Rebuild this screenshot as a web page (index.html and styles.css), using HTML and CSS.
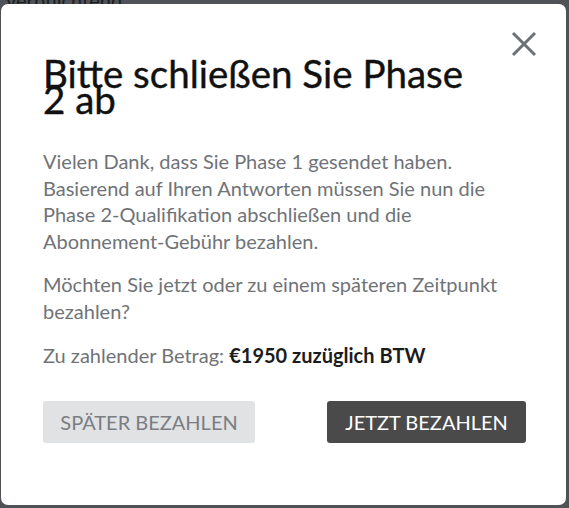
FILE: index.html
```html
<!doctype html>
<html lang="de">
<head>
	<meta charset="UTF-8">
	<title>Phase 2</title>
	<link rel="stylesheet" href="styles.css">
</head>
<body>
	<div class="page">
		<p class="page-text">verpflichtend</p>
	</div>
	<div class="overlay">
		<div class="modal">
			<button class="close" type="button" aria-label="Schließen">
				<svg width="26" height="26" viewBox="0 0 26 26">
					<path d="M2 2 L24 24 M24 2 L2 24" stroke="#6c7175" stroke-width="3" fill="none"/>
				</svg>
			</button>
			<h1 class="title">Bitte schließen Sie Phase 2 ab</h1>
			<p class="text">Vielen Dank, dass Sie Phase 1 gesendet haben. Basierend auf Ihren Antworten müssen Sie nun die Phase 2-Qualifikation abschließen und die Abonnement-Gebühr bezahlen.</p>
			<p class="text">Möchten Sie jetzt oder zu einem späteren Zeitpunkt bezahlen?</p>
			<p class="text">Zu zahlender Betrag: <strong>€1950 zuzüglich BTW</strong></p>
			<div class="actions">
				<button class="btn btn-later" type="button">Später bezahlen</button>
				<button class="btn btn-now" type="button">Jetzt bezahlen</button>
			</div>
		</div>
	</div>
</body>
</html>
```

FILE: styles.css
```css
*{
	margin: 0;
	padding: 0;
	box-sizing: border-box;
}
body{
	background-color: #4f5256;
	font-family: Lato, "Open Sans", sans-serif;
}
.page{
	padding: 0 6px;
	height: 508px;
	overflow: hidden;
}
.page-text{
	margin-top: -12px;
	font-size: 20px;
	color: #1b1d1f;
}
.overlay{
	position: fixed;
	top: 0;
	left: 0;
	right: 0;
	bottom: 0;
	padding: 4px 3px 3px 1px;
}
.modal{
	position: relative;
	height: 501px;
	background-color: #fff;
	border-radius: 7px;
	padding: 56px 40px 0 42px;
}
.close{
	position: absolute;
	top: 27px;
	right: 29px;
	width: 26px;
	height: 26px;
	border: 0;
	background: none;
	cursor: pointer;
}
.close svg{
	display: block;
}
.title{
	font-size: 38.5px;
	font-weight: 400;
	line-height: 26px;
	color: #111;
	-webkit-text-stroke: 0.4px #111;
	padding-right: 40px;
	margin-bottom: 36px;
}
.text{
	font-size: 20px;
	line-height: 26.6px;
	color: #6f7377;
	margin-bottom: 17px;
}
.text strong{
	font-weight: 700;
	color: #1c1c1c;
}
.actions{
	display: flex;
	justify-content: space-between;
	margin-top: 33px;
}
.btn{
	height: 42px;
	border: 0;
	border-radius: 3px;
	font-family: Lato, "Open Sans", sans-serif;
	font-size: 20px;
	text-transform: uppercase;
	cursor: pointer;
}
.btn-later{
	width: 212px;
	background-color: #e1e2e4;
	color: #7a7e83;
}
.btn-now{
	width: 199px;
	background-color: #4a4a4a;
	color: #fff;
}
```
